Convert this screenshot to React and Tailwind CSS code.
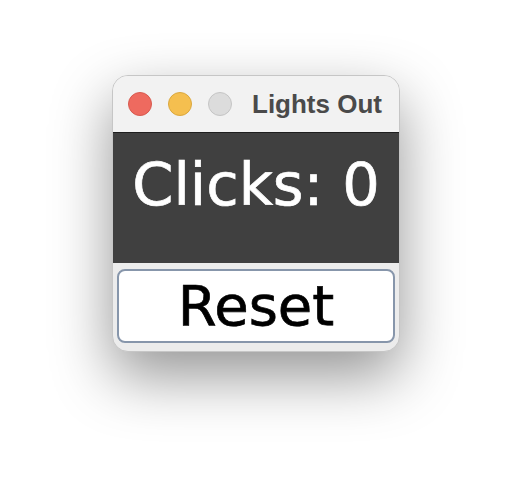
import React, { useState } from 'react';

function App() {
  const [clicks, setClicks] = useState(0);

  return (
    <div className="min-h-[500px] w-[512px] bg-white pt-[75px] pl-[112px]">
      {/* Window */}
      <div className="w-[288px] h-[277px] rounded-[16px] border border-[#c6c6c6] bg-[#ececec] overflow-hidden flex flex-col shadow-[0_24px_60px_rgba(0,0,0,0.42)]">
        {/* Title bar */}
        <div className="h-[56px] bg-[#f2f2f2] flex items-center pl-[15px]">
          <div className="flex gap-[16px]">
            <span className="w-[24px] h-[24px] rounded-full bg-[#ee6a5f] border border-[#d85a4f]" />
            <span className="w-[24px] h-[24px] rounded-full bg-[#f5bf4f] border border-[#dba83e]" />
            <span className="w-[24px] h-[24px] rounded-full bg-[#dcdcdc] border border-[#c5c5c5]" />
          </div>
          <span
            className="ml-[20px] text-[26px] font-bold text-[#4a4a4a] leading-none"
            style={{ fontFamily: '"Liberation Sans", Arial, sans-serif' }}
          >
            Lights Out
          </span>
        </div>

        {/* Label */}
        <div className="h-[131px] bg-[#404040] border-t border-[#1e1e1e] flex justify-center pt-[17px]">
          <span
            className="text-white text-[59px] leading-[1.2] [-webkit-text-stroke:0.7px_white]"
            style={{ fontFamily: '"DejaVu Sans", sans-serif' }}
          >
            Clicks: {clicks}
          </span>
        </div>

        {/* Button */}
        <div className="flex-1 px-[4px] pt-[6px] pb-[8px]">
          <button
            onClick={() => setClicks(0)}
            className="w-full h-[74px] rounded-[8px] border-2 border-[#8796ab] bg-white text-black text-[56px] leading-none flex items-center justify-center [-webkit-text-stroke:0.7px_black]"
            style={{ fontFamily: '"DejaVu Sans", sans-serif' }}
          >
            Reset
          </button>
        </div>
      </div>
    </div>
  );
}

export default App;
